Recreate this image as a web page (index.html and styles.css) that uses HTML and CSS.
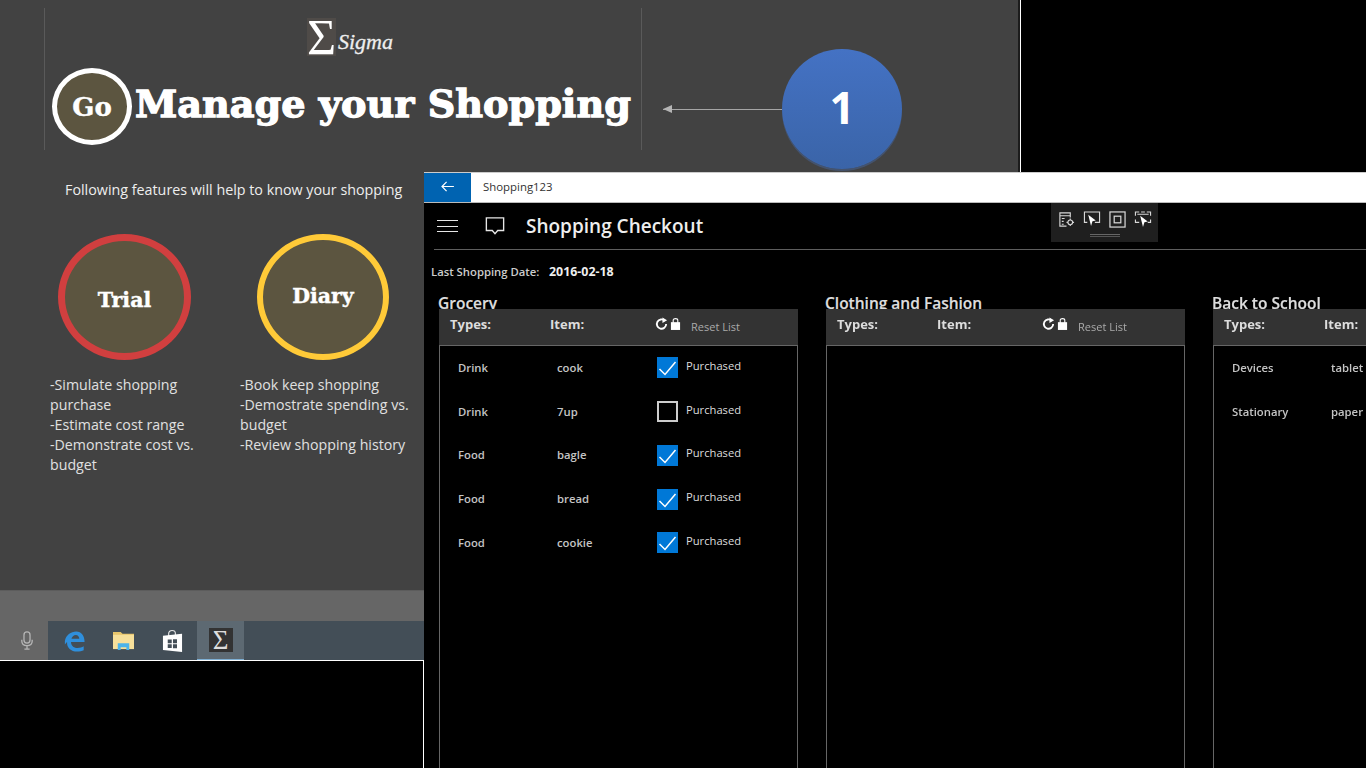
FILE: index.html
```html
<!DOCTYPE html>
<html lang="en">
  <head>
    <meta charset="UTF-8" />
    <meta name="viewport" content="width=device-width, initial-scale=1.0" />
    <title>Manage your Shopping</title>
    <link rel="stylesheet" href="styles.css">
  </head>
  <body>
    <div class="screen">
      <div class="desktop">
        <div class="hero">
          <div class="logo">
            <span class="logo_box">Σ</span>
            <span class="logo_name">Sigma</span>
          </div>
          <div class="hero_title">
            <div class="go">Go</div>
            <h1>Manage your Shopping</h1>
          </div>
        </div>

        <p class="lead">Following features will help to know your shopping</p>

        <div class="features">
          <div class="feature">
            <div class="ring ring_red"><span>Trial</span></div>
            <p>-Simulate shopping purchase<br>-Estimate cost range<br>-Demonstrate cost vs. budget</p>
          </div>
          <div class="feature feature_diary">
            <div class="ring ring_yellow"><span>Diary</span></div>
            <p>-Book keep shopping<br>-Demostrate spending vs. budget<br>-Review shopping history</p>
          </div>
        </div>

        <div class="taskbar">
          <div class="taskbar_top"></div>
          <div class="taskbar_row">
            <div class="mic">
              <svg viewBox="0 0 16 22" width="14" height="19" fill="none" stroke="#b5b5b5" stroke-width="1.5">
                <rect x="4.5" y="1" width="7" height="13" rx="3.5" />
                <path d="M2 10v2c0 3.500 2.500 5 6 5s6-1.500 6-5v-2M8 17v4M5 21h6" />
              </svg>
            </div>
            <div class="tray">
              <div class="tray_item">
                <svg viewBox="0 0 24 24" width="21" height="22">
                  <path fill="#2f8fdc" fill-rule="evenodd" d="M1 12C2 5 8 1 14 1c6 0 9.500 5 9.500 12H8c0 5 4 7 7.500 7 3 0 5-.8 7-2v4.500c-2 1-4.500 1.500-7.500 1.500C8 24 3 19.500 3.500 13 2.800 13.500 2 14.500 1 16zM8.500 9.500h9C17.500 7 16 5 13.500 5S9 7 8.500 9.500z" />
                </svg>
              </div>
              <div class="tray_item">
                <svg viewBox="0 0 24 22" width="23" height="21">
                  <path fill="#e8c66c" d="M1 2h8l2 2h12v3H1z" />
                  <path fill="#f7e09a" d="M1 5h22v15H1z" />
                  <path fill="#4db4ea" d="M6 14h12v7h-3v-3H9v3H6z" />
                </svg>
              </div>
              <div class="tray_item">
                <svg viewBox="0 0 22 24" width="21" height="24">
                  <path fill="none" stroke="#e8e8e8" stroke-width="1.200" d="M7 7V4c0-4 7-4 7 0v3" />
                  <path fill="#fff" d="M1 6.500l20-2v19l-20-2z" />
                  <path fill="#434e57" d="M6 10.500h4.200v3.800H6zM11.500 10.200h4.200v4.100h-4.200zM6 15.500h4.200v3.800H6zM11.500 15.500h4.200v4.200h-4.200z" />
                </svg>
              </div>
              <div class="tray_item tray_active">
                <span class="tile">Σ</span>
              </div>
            </div>
          </div>
        </div>
      </div>

      <div class="callout">
        <div class="callout_line"></div>
        <div class="badge">1</div>
      </div>

      <div class="corner"></div>

      <div class="window">
        <div class="titlebar">
          <div class="back">
            <svg viewBox="0 0 14 12" width="13" height="11" fill="none" stroke="#fff" stroke-width="1.300">
              <path d="M14 6H1M6 1L1 6l5 5" />
            </svg>
          </div>
          <div class="titlebar_name">Shopping123</div>
        </div>

        <div class="appbar">
          <div class="burger"><i></i><i></i><i></i></div>
          <svg class="bubble" viewBox="0 0 22 21" width="20" height="20" fill="none" stroke="#e6e6e6" stroke-width="1.500">
            <path d="M1.500 1.500h19v14h-6.500l-3 3.500-3-3.500H1.500z" />
          </svg>
          <h2>Shopping Checkout</h2>
        </div>

        <div class="tools">
          <div class="tools_icons">
            <svg viewBox="0 0 18 18" width="17" height="17" fill="none" stroke="#d8d8d8" stroke-width="1.200">
              <path d="M9 16H2V2h11v5M2 5h11M4 8h3M4 11h2M4 14h2" />
              <circle cx="13" cy="12" r="2.500" />
              <path d="M13 8v1.500M13 14.500V16M9 12h1.500M15.500 12H17" />
            </svg>
            <svg viewBox="0 0 18 18" width="18" height="17" fill="none" stroke="#d8d8d8" stroke-width="1.200">
              <path d="M4 12H1V1h16v11h-5" />
              <path fill="#fff" stroke="none" d="M5 4l8 6-3.500.8L8 16z" />
            </svg>
            <svg viewBox="0 0 18 18" width="17" height="17" fill="none" stroke="#d8d8d8" stroke-width="1.300">
              <rect x="1" y="1" width="16" height="16" />
              <rect x="5.500" y="5.500" width="7" height="7" />
            </svg>
            <svg viewBox="0 0 18 18" width="18" height="17" fill="none" stroke="#d8d8d8" stroke-width="1.200">
              <path d="M1 5V1h4M13 1h4v4M17 9v3h-3M1 9v3h3M7 1h4M3 3.500h12M5 12H3" />
              <path fill="#fff" stroke="none" d="M6 5l8 6-3.500.8L9 17z" />
            </svg>
          </div>
          <div class="tools_grip"></div>
        </div>

        <div class="rule"></div>

        <div class="last_date">
          <span class="last_date_label">Last Shopping Date:</span>
          <span class="last_date_value">2016-02-18</span>
        </div>

        <div class="columns">
          <section class="column">
            <h3>Grocery</h3>
            <div class="column_head">
              <span class="head_cell">Types:</span>
              <span class="head_cell">Item:</span>
              <div class="reset">
                <svg viewBox="0 0 14 14" width="13" height="14" fill="none" stroke="#fff" stroke-width="2">
                  <path d="M10.500 3.500A5 5 0 1 0 12 7" />
                  <path fill="#fff" stroke="none" d="M8 0v6l5-3z" />
                </svg>
                <svg viewBox="0 0 12 14" width="11" height="14">
                  <path fill="none" stroke="#fff" stroke-width="1.200" d="M3.500 6V3c0-2.500 5-2.500 5 0v3" />
                  <rect x="1" y="5" width="10" height="8.500" fill="#fff" />
                </svg>
                <span class="reset_label">Reset List</span>
              </div>
            </div>
            <div class="list">
              <div class="row">
                <span>Drink</span>
                <span>cook</span>
                <div class="check">
                  <span class="box box_on"><svg viewBox="0 0 21 21" width="21" height="21"><path d="M2.500 12L8 17.500 18.500 5" /></svg></span>
                  <span class="check_label">Purchased</span>
                </div>
              </div>
              <div class="row">
                <span>Drink</span>
                <span>7up</span>
                <div class="check">
                  <span class="box"></span>
                  <span class="check_label">Purchased</span>
                </div>
              </div>
              <div class="row">
                <span>Food</span>
                <span>bagle</span>
                <div class="check">
                  <span class="box box_on"><svg viewBox="0 0 21 21" width="21" height="21"><path d="M2.500 12L8 17.500 18.500 5" /></svg></span>
                  <span class="check_label">Purchased</span>
                </div>
              </div>
              <div class="row">
                <span>Food</span>
                <span>bread</span>
                <div class="check">
                  <span class="box box_on"><svg viewBox="0 0 21 21" width="21" height="21"><path d="M2.500 12L8 17.500 18.500 5" /></svg></span>
                  <span class="check_label">Purchased</span>
                </div>
              </div>
              <div class="row">
                <span>Food</span>
                <span>cookie</span>
                <div class="check">
                  <span class="box box_on"><svg viewBox="0 0 21 21" width="21" height="21"><path d="M2.500 12L8 17.500 18.500 5" /></svg></span>
                  <span class="check_label">Purchased</span>
                </div>
              </div>
            </div>
          </section>

          <section class="column">
            <h3>Clothing and Fashion</h3>
            <div class="column_head">
              <span class="head_cell">Types:</span>
              <span class="head_cell">Item:</span>
              <div class="reset">
                <svg viewBox="0 0 14 14" width="13" height="14" fill="none" stroke="#fff" stroke-width="2">
                  <path d="M10.500 3.500A5 5 0 1 0 12 7" />
                  <path fill="#fff" stroke="none" d="M8 0v6l5-3z" />
                </svg>
                <svg viewBox="0 0 12 14" width="11" height="14">
                  <path fill="none" stroke="#fff" stroke-width="1.200" d="M3.500 6V3c0-2.500 5-2.500 5 0v3" />
                  <rect x="1" y="5" width="10" height="8.500" fill="#fff" />
                </svg>
                <span class="reset_label">Reset List</span>
              </div>
            </div>
            <div class="list"></div>
          </section>

          <section class="column">
            <h3>Back to School</h3>
            <div class="column_head">
              <span class="head_cell">Types:</span>
              <span class="head_cell">Item:</span>
            </div>
            <div class="list">
              <div class="row">
                <span>Devices</span>
                <span>tablet</span>
              </div>
              <div class="row">
                <span>Stationary</span>
                <span>paper</span>
              </div>
            </div>
          </section>
        </div>
      </div>
    </div>
  </body>
</html>
```

FILE: styles.css
```css
* {
  box-sizing: border-box;
  padding: 0;
  margin: 0;
}
html,
body {
  height: 100%;
  background: #000;
  overflow: hidden;
}
.screen {
  position: relative;
  width: 1366px;
  height: 768px;
  overflow: hidden;
  font-family: "Open Sans", "Noto Sans", sans-serif;
  filter: blur(0.3px);
}

/* desktop behind the app window */
.desktop {
  position: absolute;
  left: 0;
  top: 0;
  width: 1021px;
  height: 660px;
  display: flex;
  flex-direction: column;
  background: #424242;
  border-right: 1px solid #fff;
  box-shadow: inset -2px 0 0 #1c1c1c;
}
.hero {
  width: 598px;
  height: 142px;
  margin: 8px 0 0 44px;
  border-left: 1px solid #5a5a5a;
  border-right: 1px solid #5a5a5a;
  display: flex;
  flex-direction: column;
}
.logo {
  display: flex;
  align-items: flex-end;
  height: 38px;
  margin: 10px 0 0 262px;
  gap: 2px;
}
.logo_box {
  width: 29px;
  height: 38px;
  background: #4f4b48;
  color: #fff;
  font-family: "Liberation Serif", serif;
  font-size: 50px;
  line-height: 38px;
  text-align: center;
}
.logo_name {
  font-family: "Liberation Serif", serif;
  font-style: italic;
  font-size: 22px;
  color: #eee;
  line-height: 28px;
  -webkit-text-stroke: 0.3px #eee;
}
.hero_title {
  display: flex;
  align-items: center;
  margin: 12px 0 0 7px;
  gap: 3px;
}
.go {
  width: 80px;
  height: 77px;
  flex: none;
  border: 5px solid #fff;
  border-radius: 50%;
  background: #5c5540;
  color: #fff;
  display: flex;
  align-items: center;
  justify-content: center;
  font-family: "DejaVu Serif", serif;
  font-weight: 700;
  font-size: 26px;
  -webkit-text-stroke: 0.4px #fff;
}
.hero_title h1 {
  margin-bottom: 6px;
  font-family: "DejaVu Serif", serif;
  font-weight: 700;
  font-size: 38.200px;
  line-height: 46px;
  color: #fff;
  white-space: nowrap;
  -webkit-text-stroke: 1.300px #fff;
}
.lead {
  margin: 30px 0 0 65px;
  font-size: 14.300px;
  line-height: 20px;
  color: #eee;
  white-space: nowrap;
}
.features {
  display: grid;
  grid-template-columns: 190px 180px;
  margin: 34px 0 0 50px;
}
.feature p {
  margin-top: 15px;
  font-size: 14.200px;
  line-height: 20px;
  color: #e0e0e0;
}
.ring {
  width: 133px;
  height: 126px;
  margin-left: 8px;
  border: 7px solid;
  border-radius: 50%;
  background: #5c5540;
  color: #fff;
  display: flex;
  align-items: center;
  justify-content: center;
  font-family: "DejaVu Serif", serif;
  font-weight: 700;
  font-size: 20.500px;
  -webkit-text-stroke: 0.4px #fff;
}
.ring span {
  margin-top: 6px;
}
.ring_red {
  border-color: #d13f3f;
}
.ring_yellow {
  width: 132px;
  margin-left: 17px;
  border-width: 6px;
  border-color: #ffca38;
}
.ring_yellow span {
  margin-top: 0;
  margin-bottom: 2px;
}
.taskbar {
  margin-top: auto;
  width: 424px;
}
.taskbar_top {
  height: 31px;
  background: #666;
  border-top: 1px solid #5c5c5c;
}
.taskbar_row {
  display: flex;
  height: 39px;
}
.mic {
  width: 48px;
  padding-left: 6px;
  background: #666;
  display: flex;
  align-items: center;
  justify-content: center;
}
.tray {
  flex: 1;
  display: flex;
  padding-left: 2px;
  background: #434e57;
}
.tray_item {
  width: 49px;
  display: flex;
  align-items: center;
  justify-content: center;
}
.tray_active {
  width: 47px;
  background: #5d6972;
  border-bottom: 1px solid #7fb0d4;
}
.tile {
  width: 24px;
  height: 24px;
  background: #333;
  color: #ddd;
  font-family: "Liberation Serif", serif;
  font-size: 27px;
  line-height: 24px;
  text-align: center;
}

/* pointer with the numbered badge */
.callout {
  position: absolute;
  left: 663px;
  top: 48px;
  width: 239px;
  height: 121px;
  display: flex;
  align-items: center;
}
.callout_line {
  position: relative;
  width: 119px;
  height: 1px;
  margin-top: 1px;
  background: #a6a6a6;
}
.callout_line::before {
  content: "";
  position: absolute;
  left: 0;
  top: -4px;
  border: 4.500px solid transparent;
  border-left: 0;
  border-right: 9px solid #b5b5b5;
}
.badge {
  width: 120px;
  height: 120px;
  padding-bottom: 3px;
  border-radius: 50%;
  background: linear-gradient(#4472c4, #3a64a8);
  box-shadow: 0 2px 0 #44536e;
  color: #fff;
  display: flex;
  align-items: center;
  justify-content: center;
  font-weight: 700;
  font-size: 44px;
}
.corner {
  position: absolute;
  left: 0;
  top: 660px;
  width: 424px;
  height: 108px;
  border-top: 1px solid #fff;
  border-right: 1px solid #fff;
}

/* app window */
.window {
  position: absolute;
  left: 424px;
  top: 172px;
  width: 942px;
  height: 596px;
  overflow: hidden;
  background: #000;
  color: #fff;
}
.titlebar {
  display: flex;
  align-items: center;
  height: 31px;
  background: #fff;
  border-top: 1px solid #ccc;
  border-bottom: 1px solid #bbb;
}
.back {
  width: 47px;
  height: 100%;
  padding-bottom: 2px;
  padding-right: 1px;
  background: #0063b1;
  display: flex;
  align-items: center;
  justify-content: center;
}
.titlebar_name {
  margin: -3px 0 0 12px;
  font-size: 11.400px;
  color: #333;
}
.appbar {
  display: flex;
  align-items: center;
  height: 46px;
  padding-left: 13px;
}
.burger {
  width: 21px;
  display: flex;
  flex-direction: column;
  gap: 4.500px;
}
.burger i {
  height: 1px;
  background: #e6e6e6;
}
.bubble {
  margin-left: 27px;
}
.appbar h2 {
  margin-left: 21px;
  font-size: 19px;
  font-weight: 600;
  color: #eee;
}
.tools {
  position: absolute;
  left: 627px;
  top: 31px;
  width: 107px;
  height: 39px;
  background: #1f1f1f;
}
.tools_icons {
  display: flex;
  gap: 8px;
  padding: 8px 0 0 7px;
}
.tools_grip {
  width: 30px;
  height: 3px;
  margin: 6px auto 0;
  border-top: 1px solid #666;
  border-bottom: 1px solid #555;
}
.rule {
  height: 1px;
  margin-left: 10px;
  background: #5e5e5e;
}
.last_date {
  display: flex;
  align-items: center;
  height: 20px;
  margin: 11px 0 0 7px;
}
.last_date_label {
  width: 118px;
  font-size: 11.300px;
  font-weight: 600;
  color: #ccc;
}
.last_date_value {
  font-size: 12.400px;
  font-weight: 700;
  color: #eee;
}
.columns {
  display: grid;
  grid-template-columns: repeat(3, 359px);
  column-gap: 28px;
  margin: 12px 0 0 15px;
}
.column {
  height: 560px;
  position: relative;
}
.column h3 {
  height: 16px;
  margin-left: -1px;
  overflow: hidden;
  font-size: 15.500px;
  font-weight: 600;
  line-height: 20px;
  color: #ddd;
  white-space: nowrap;
  -webkit-text-stroke: 0.2px #ddd;
}
.column_head {
  display: grid;
  grid-template-columns: 100px 105px 1fr;
  align-items: center;
  height: 37px;
  padding: 0 0 6px 11px;
  background: #333;
  border-bottom: 1px solid #666;
}
.head_cell {
  font-size: 13px;
  font-weight: 700;
  color: #ddd;
}
.reset {
  display: flex;
  align-items: center;
  gap: 2px;
}
.reset_label {
  margin: 5px 0 0 8px;
  font-size: 11px;
  color: #aaa;
}
.list {
  height: 520px;
  border-left: 1px solid #666;
  border-right: 1px solid #666;
}
.row {
  display: grid;
  grid-template-columns: 99px 100px 1fr;
  align-items: center;
  height: 43.750px;
  padding: 0 0 1px 18px;
  font-size: 11.300px;
  font-weight: 600;
  color: #c4c4c4;
}
.check {
  display: flex;
  align-items: center;
  gap: 8px;
  margin-top: 1px;
}
.box {
  width: 21px;
  height: 21px;
  border: 2px solid #ccc;
}
.box_on {
  border: 0;
  background: #0078d7;
}
.box svg {
  display: block;
  fill: none;
  stroke: #fff;
  stroke-width: 1.500;
}
.check_label {
  margin-top: -5px;
  font-size: 11.200px;
  font-weight: 400;
  color: #ddd;
}
```
